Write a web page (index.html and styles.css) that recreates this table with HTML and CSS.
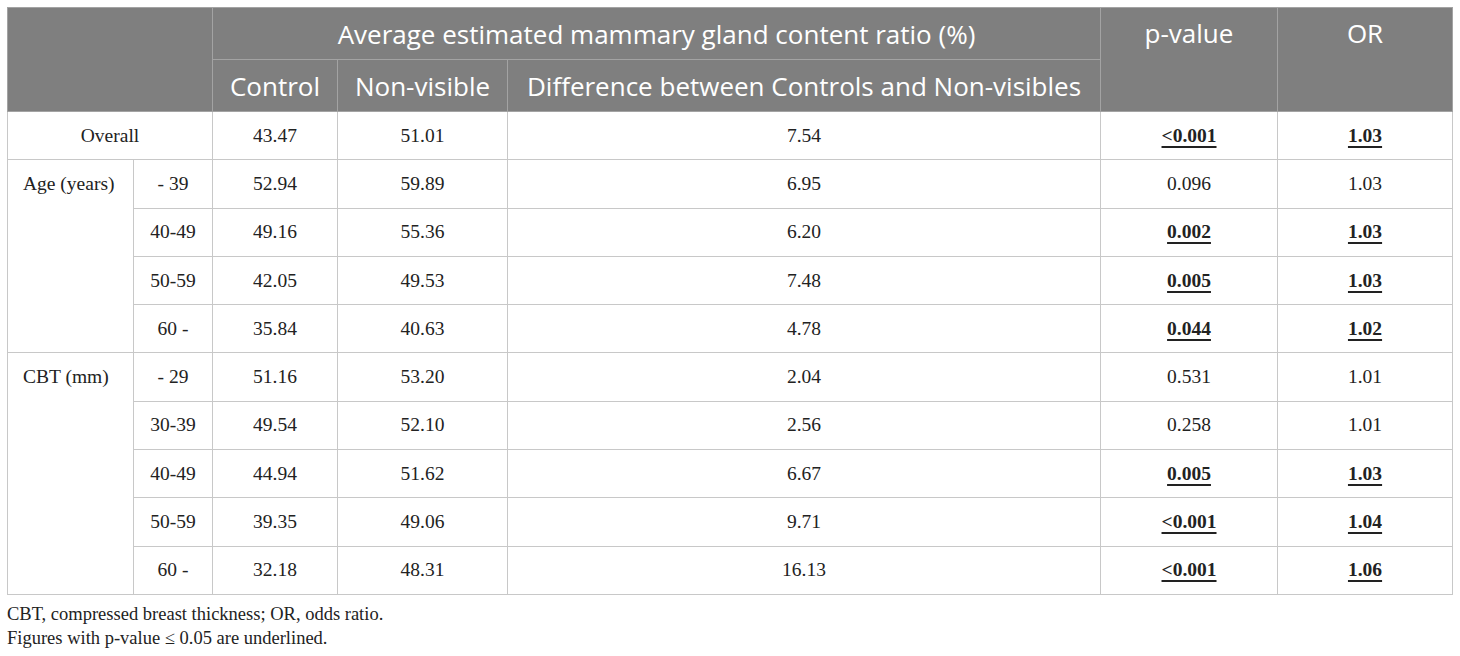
FILE: index.html
```html
<!DOCTYPE html>
<html>
<head>
<meta charset="utf-8">
<link rel="stylesheet" href="styles.css">
</head>
<body>
<table class="data">
  <colgroup>
    <col class="c1"><col class="c2"><col class="c3"><col class="c4"><col class="c5"><col class="c6"><col class="c7">
  </colgroup>
  <thead>
    <tr class="h1">
      <th colspan="2" rowspan="2"></th>
      <th colspan="3">Average estimated mammary gland content ratio (%)</th>
      <th rowspan="2" class="top">p-value</th>
      <th rowspan="2" class="top">OR</th>
    </tr>
    <tr class="h2">
      <th>Control</th>
      <th>Non-visible</th>
      <th>Difference between Controls and Non-visibles</th>
    </tr>
  </thead>
  <tbody>
    <tr><td colspan="2">Overall</td><td>43.47</td><td>51.01</td><td>7.54</td><td><span class="sig">&lt;0.001</span></td><td><span class="sig">1.03</span></td></tr>
    <tr><td rowspan="4" class="grp">Age (years)</td><td>- 39</td><td>52.94</td><td>59.89</td><td>6.95</td><td>0.096</td><td>1.03</td></tr>
    <tr><td>40-49</td><td>49.16</td><td>55.36</td><td>6.20</td><td><span class="sig">0.002</span></td><td><span class="sig">1.03</span></td></tr>
    <tr><td>50-59</td><td>42.05</td><td>49.53</td><td>7.48</td><td><span class="sig">0.005</span></td><td><span class="sig">1.03</span></td></tr>
    <tr><td>60 -</td><td>35.84</td><td>40.63</td><td>4.78</td><td><span class="sig">0.044</span></td><td><span class="sig">1.02</span></td></tr>
    <tr><td rowspan="5" class="grp">CBT (mm)</td><td>- 29</td><td>51.16</td><td>53.20</td><td>2.04</td><td>0.531</td><td>1.01</td></tr>
    <tr><td>30-39</td><td>49.54</td><td>52.10</td><td>2.56</td><td>0.258</td><td>1.01</td></tr>
    <tr><td>40-49</td><td>44.94</td><td>51.62</td><td>6.67</td><td><span class="sig">0.005</span></td><td><span class="sig">1.03</span></td></tr>
    <tr><td>50-59</td><td>39.35</td><td>49.06</td><td>9.71</td><td><span class="sig">&lt;0.001</span></td><td><span class="sig">1.04</span></td></tr>
    <tr><td>60 -</td><td>32.18</td><td>48.31</td><td>16.13</td><td><span class="sig">&lt;0.001</span></td><td><span class="sig">1.06</span></td></tr>
  </tbody>
</table>
<div class="notes">
  <p>CBT, compressed breast thickness; OR, odds ratio.</p>
  <p>Figures with p-value ≤ 0.05 are underlined.</p>
</div>
</body>
</html>
```
FILE: styles.css
```css
html, body {
  margin: 0;
  padding: 0;
  background: #ffffff;
}
body {
  padding: 7px 0 0 7px;
  font-family: "Liberation Serif", "Times New Roman", serif;
  color: #222222;
}
.data {
  border-collapse: collapse;
  table-layout: fixed;
  width: 1446px;
}
.c1 { width: 126px; }
.c2 { width: 79px; }
.c3 { width: 125px; }
.c4 { width: 170px; }
.c5 { width: 593px; }
.c6 { width: 177px; }
.c7 { width: 175px; }

.data th {
  background: #7f7f7f;
  color: #ffffff;
  font-family: "Open Sans", Lato, sans-serif;
  font-weight: 400;
  font-size: 26px;
  line-height: 30px;
  border: 1px solid #a3a3a3;
  padding: 0 6px;
  text-align: center;
  vertical-align: middle;
}
.data tr.h1 th { height: 51px; }
.data tr.h2 th { height: 51px; }
.data th.top {
  vertical-align: top;
  padding-top: 10px;
}
.data td {
  border: 1px solid #c8c8c8;
  height: 47.3px;
  padding: 0 6px;
  text-align: center;
  vertical-align: middle;
  font-size: 19.5px;
}
.data td.grp {
  text-align: left;
  vertical-align: top;
  padding: 13px 0 0 15px;
}
.sig {
  font-weight: 700;
  text-decoration: underline;
  text-decoration-thickness: 2px;
  text-underline-offset: 4px;
}
.notes {
  padding-top: 7px;
  font-size: 18.5px;
  line-height: 24px;
  color: #222222;
}
.notes p { margin: 0; }
```
